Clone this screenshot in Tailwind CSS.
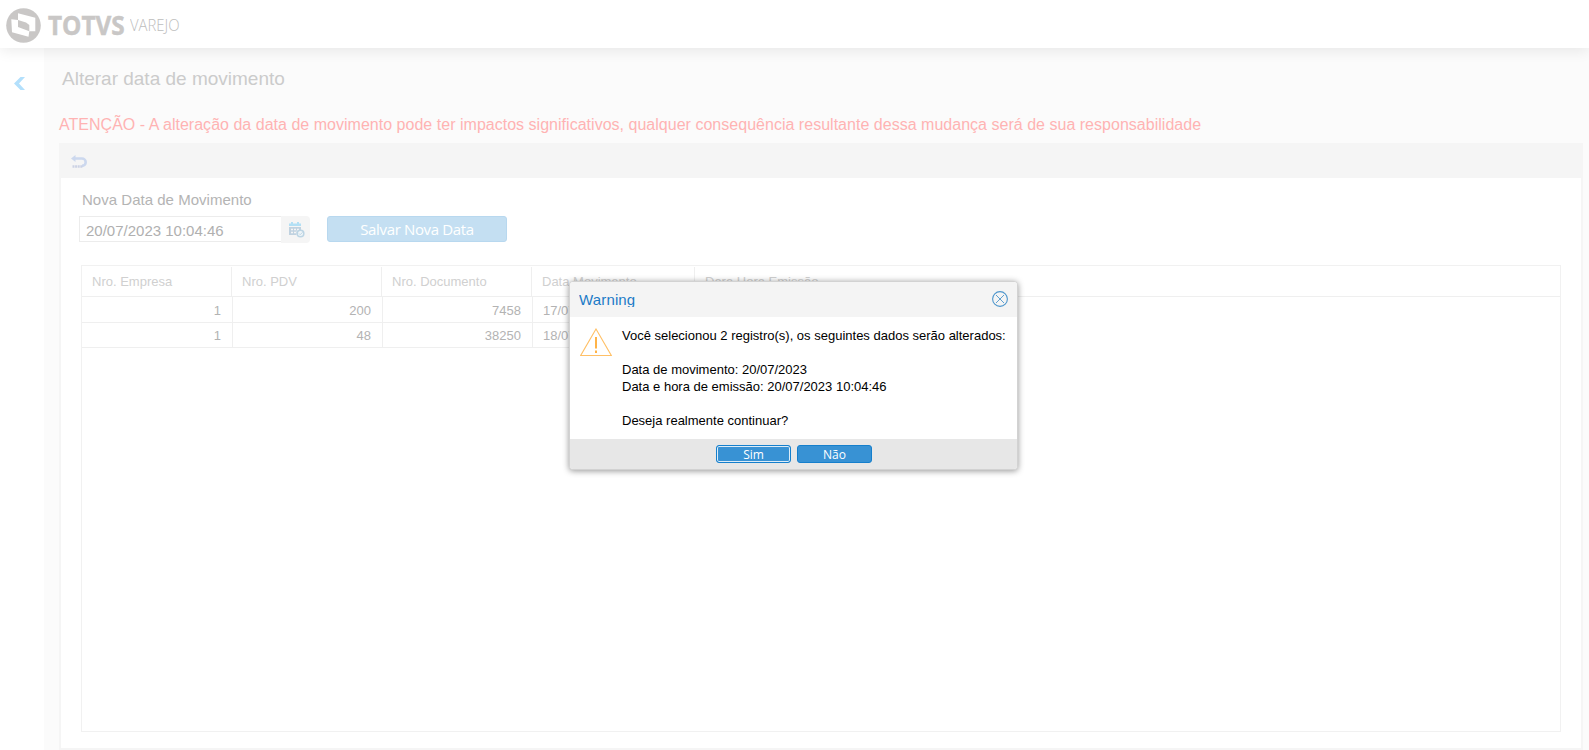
<!DOCTYPE html>
<html lang="pt-BR">
<head>
    <meta charset="UTF-8">
    <meta name="viewport" content="width=device-width, initial-scale=1.0">
    <title>TOTVS Varejo - Alterar data de movimento</title>
    <script src="https://cdn.jsdelivr.net/npm/@tailwindcss/browser@4"></script>
    <style>
        body {
            font-family: 'Liberation Sans', Arial, sans-serif;
        }
    </style>
</head>
<body class="relative h-[750px] w-[1589px] overflow-hidden bg-white flex flex-col">

    <!-- Top bar -->
    <header class="relative z-10 h-12 shrink-0 bg-white flex items-center pl-1.5 shadow-[0_2px_14px_rgba(0,0,0,0.09)]">
        <svg class="h-[35px] w-[35px] mt-[3px]" viewBox="0 0 35 35">
            <circle cx="17.5" cy="17.5" r="17.3" fill="#c9c7c6"/>
            <path d="M12 5.300L29.300 9.700V23.200H23.300L22.500 28.700 6 24.300 5.300 11.300 12 12z" fill="#fff"/>
            <path d="M12 12L20 14.500 23.300 17V23.200L12 19z" fill="#c9c7c6"/>
        </svg>
        <span class="ml-[7px] mt-px w-[76px] text-[27px] leading-none font-bold text-[#c9c7c6] [font-family:'Open_Sans',sans-serif] whitespace-nowrap"><span class="inline-block origin-left scale-x-[0.9] [-webkit-text-stroke:0.5px_#c9c7c6]">TOTVS</span></span>
        <span class="ml-[6px] mt-px text-[16px] leading-none font-light text-[#bdbdbd] [font-family:'Open_Sans',sans-serif] whitespace-nowrap"><span class="inline-block origin-left scale-x-[0.93]">VAREJO</span></span>
    </header>

    <div class="flex flex-1 min-h-0">
        <!-- Collapsed side menu -->
        <aside class="w-11 shrink-0 bg-white pt-[29px] pl-3.5">
            <svg class="w-[11px] h-[13px]" viewBox="0 0 11 13"><path d="M11 0H6.500L0 6.500 6.500 13H11L5 6.500z" fill="#b3e0fc"/></svg>
        </aside>

        <main class="flex-1 min-w-0 bg-[#fbfbfb] pl-[15px] pr-1.5 flex flex-col">
            <h1 class="pl-[3px] pt-[19px] text-[19px] leading-[24px] text-[#cbcbcb] whitespace-nowrap">Alterar data de movimento</h1>
            <p class="mt-6 text-[16px] leading-5 tracking-[0.02px] text-[#ffb3b3] whitespace-nowrap">ATENÇÃO - A alteração da data de movimento pode ter impactos significativos, qualquer consequência resultante dessa mudança será de sua responsabilidade</p>

            <section class="mt-2 flex-1 min-h-0 flex flex-col bg-[#f5f5f5] pr-0.5 pb-0.5 pl-0.5">
                <div class="h-[35px] shrink-0 pl-2.5 pt-3">
                    <svg class="w-4 h-3.5" viewBox="0 0 16 14" fill="none">
                        <path d="M3 3.500h8a3.700 3.700 0 0 1 0 7.400" stroke="#ccd8ee" stroke-width="2.600"/>
                        <path d="M4.500 0v7L0 3.500z" fill="#ccd8ee"/>
                        <path d="M1.500 11.500h10" stroke="#ccd2e4" stroke-width="2.400" stroke-dasharray="2 .6"/>
                    </svg>
                </div>

                <div class="flex-1 min-h-0 bg-white flex flex-col pt-[11px] pl-5 pr-5 pb-4">
                    <label class="pl-[1px] text-[15px] leading-[22px] tracking-[0.02px] text-[#b4b4b4]">Nova Data de Movimento</label>
                    <div class="mt-[5px] -ml-[2px] flex">
                        <div class="w-[202px] h-[26px] border border-[#ececec] border-r-0 pl-1.5 text-[15px] leading-7 text-[#b0b0b0]">20/07/2023 10:04:46</div>
                        <div class="w-[29px] h-[27px] rounded-r bg-[#f5f5f5] pl-2 pt-1.5">
                            <svg class="w-4 h-4" viewBox="0 0 16 16">
                                <path d="M0 1.500h2V0h2v1.500h4V0h2v1.500h2V4H0z" fill="#b3e0f5"/>
                                <path d="M0 5h12v3.500H7.500V13H0z" fill="#c0d2e0"/>
                                <path d="M2 7.500h2M5 7.500h2M8 7.500h2M2 10.500h2M5 10.500h2" stroke="#f5f5f5" stroke-width="1.300"/>
                                <circle cx="11.500" cy="11.500" r="3.300" fill="#f0f5f8" stroke="#bdd5e4" stroke-width="1.600"/>
                                <path d="M10 11.500l1.200 1.200 2.300-2.400" fill="none" stroke="#bdd5e4"/>
                            </svg>
                        </div>
                        <button class="ml-[17px] w-[180px] h-[26px] rounded-[3px] border border-[#b8d8ef] bg-[#c4dff2] text-white text-[15px] leading-6 font-medium tracking-[-0.35px] [font-family:'Open_Sans',sans-serif]">Salvar Nova Data</button>
                    </div>

                    <!-- Documents grid -->
                    <div class="mt-[22px] flex-1 min-h-0 border border-[#f1f1f1] text-[13px] whitespace-nowrap">
                        <div class="h-[31px] border-b border-[#efefef] pt-px flex leading-[29px] text-[#d0d0d0]">
                            <div class="w-[150px] border-r border-[#efefef] pl-2.5">Nro. Empresa</div>
                            <div class="w-[150px] border-r border-[#efefef] pl-2.5">Nro. PDV</div>
                            <div class="w-[150px] border-r border-[#efefef] pl-2.5">Nro. Documento</div>
                            <div class="w-[163px] border-r border-[#efefef] pl-2.5">Data Movimento</div>
                            <div class="pl-2.5">Dara Hora Emissão</div>
                        </div>
                        <div class="flex h-[26px] w-[800px] border-b border-[#efefef] leading-[28px] text-[#b3b3b3]">
                            <div class="w-[151px] border-r border-[#efefef] pr-[11px] text-right">1</div>
                            <div class="w-[150px] border-r border-[#efefef] pr-[11px] text-right">200</div>
                            <div class="w-[150px] border-r border-[#efefef] pr-[11px] text-right">7458</div>
                            <div class="w-[163px] pl-2.5">17/07/2023</div>
                        </div>
                        <div class="flex h-[25px] w-[800px] border-b border-[#efefef] leading-[25px] text-[#b3b3b3]">
                            <div class="w-[151px] border-r border-[#efefef] pr-[11px] text-right">1</div>
                            <div class="w-[150px] border-r border-[#efefef] pr-[11px] text-right">48</div>
                            <div class="w-[150px] border-r border-[#efefef] pr-[11px] text-right">38250</div>
                            <div class="w-[163px] pl-2.5">18/07/2023</div>
                        </div>
                    </div>
                </div>
            </section>
        </main>
    </div>

    <!-- Confirmation dialog -->
    <div class="absolute z-20 left-[569px] top-[281px] w-[449px] h-[189px] rounded-[4px] border border-[#d2d2d2] bg-white overflow-hidden shadow-[0_1px_6px_rgba(0,0,0,0.42)] flex flex-col">
        <div class="h-[35px] shrink-0 bg-[#f4f4f4] flex justify-between pl-[9px] pr-[9px]">
            <div class="mt-[9px] h-4 overflow-hidden text-[15px] leading-[18px] tracking-[0.15px] text-[#1c7bc7]">Warning</div>
            <svg class="mt-[9px] w-4 h-4" viewBox="0 0 16 16" fill="none" stroke="#4e96cc">
                <circle cx="8" cy="8" r="7.400" stroke-width="1.100"/>
                <path d="M4 4l8 8M12 4l-8 8" stroke-width=".9"/>
            </svg>
        </div>
        <div class="flex-1 flex pl-2.5">
            <svg class="mt-[11px] w-8 h-[29px] shrink-0" viewBox="0 0 32 29" fill="none">
                <path d="M16 1L31.300 27.500H.7z" stroke="#ffc067" stroke-width="1.100"/>
                <path d="M16 9v11.500M16 22.500v2.500" stroke="#ffb347" stroke-width="2"/>
            </svg>
            <div class="ml-2.5 mt-2.5 text-[13px] leading-[17px] text-black whitespace-nowrap">
                <p>Você selecionou 2 registro(s), os seguintes dados serão alterados:</p>
                <br>
                <p>Data de movimento: 20/07/2023</p>
                <p>Data e hora de emissão: 20/07/2023 10:04:46</p>
                <br>
                <p>Deseja realmente continuar?</p>
            </div>
        </div>
        <div class="h-[30px] shrink-0 bg-[#e7e7e7] flex gap-1.5 pt-1.5 pl-[146px] text-white text-[12px] font-medium [font-family:'Open_Sans',sans-serif]">
            <button class="w-[75px] h-[18px] rounded-[3px] border border-[#157fcc] bg-[#3892d4] shadow-[inset_0_0_0_1px_#dcecf8] leading-[17px]">Sim</button>
            <button class="w-[75px] h-[18px] rounded-[3px] border border-[#157fcc] bg-[#3892d4] leading-[17px]">Não</button>
        </div>
    </div>

</body>
</html>
